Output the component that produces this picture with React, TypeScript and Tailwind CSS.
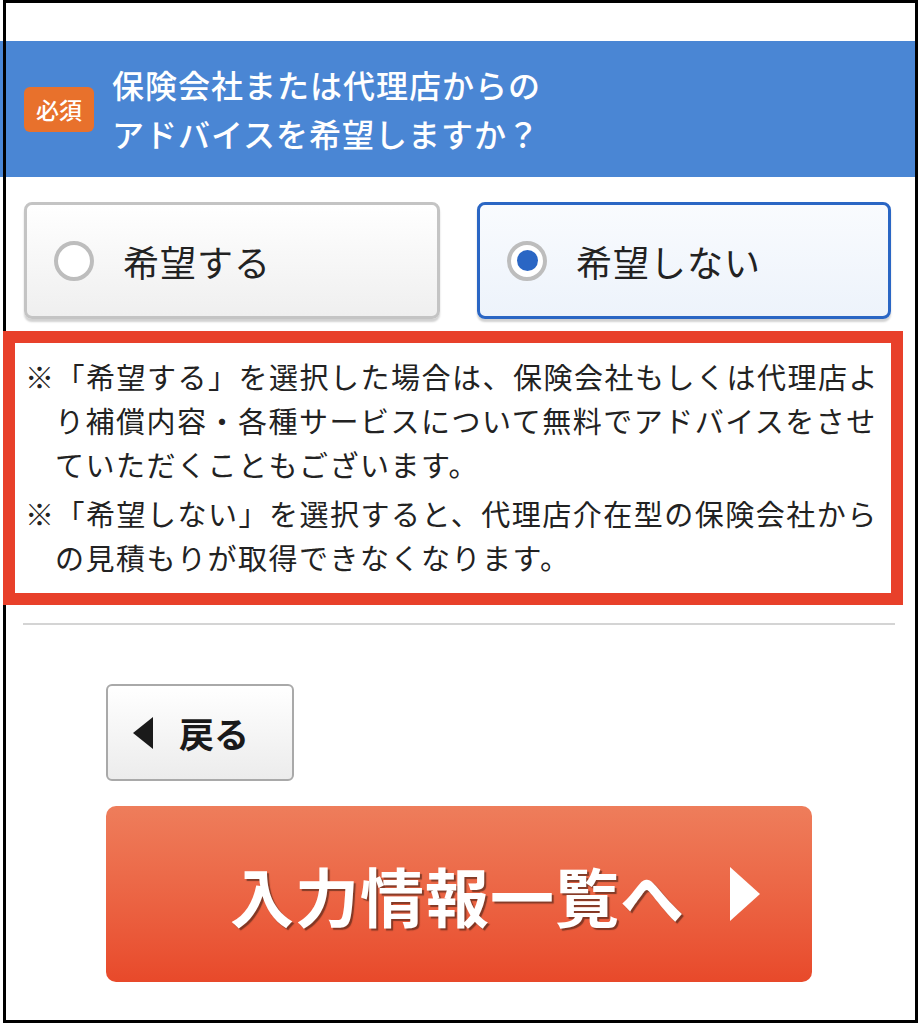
import React from 'react'

const jp = "font-['Noto_Sans_CJK_JP','Noto_Sans',sans-serif]"

function RadioCard({ label, checked }: { label: string; checked?: boolean }) {
  return (
    <div
      className={
        checked
          ? 'flex h-[117px] items-center rounded-[8px] border-[3px] border-[#2a66c4] bg-gradient-to-b from-[#f9fbfe] to-[#edf3fb] pl-[27px] shadow-[0_3px_2px_rgba(0,0,0,0.18)]'
          : 'flex h-[117px] items-center rounded-[8px] border-[3px] border-[#c4c4c4] bg-gradient-to-b from-white to-[#efefef] pl-[27px] shadow-[0_3px_2px_rgba(0,0,0,0.18)]'
      }
    >
      <span className="flex h-[40px] w-[40px] shrink-0 items-center justify-center rounded-full border-[4px] border-[#bdbdbd] bg-white">
        {checked && <span className="h-[21px] w-[21px] rounded-full bg-[#2a66c4]" />}
      </span>
      <span className="ml-[29px] text-[36px] leading-none tracking-[1px] text-[#222]">
        {label}
      </span>
    </div>
  )
}

const notes = [
  [
    '※「希望する」を選択した場合は、保険会社もしくは代理店よ',
    'り補償内容・各種サービスについて無料でアドバイスをさせ',
    'ていただくこともございます。',
  ],
  [
    '※「希望しない」を選択すると、代理店介在型の保険会社から',
    'の見積もりが取得できなくなります。',
  ],
]

export default function App() {
  return (
    <div className={`relative h-[1024px] w-[919px] overflow-hidden bg-white ${jp}`}>
      {/* outer frame */}
      <div className="pointer-events-none absolute top-0 left-[3px] z-10 h-[1023px] w-[915px] border-[3px] border-black" />

      <div className="pt-[41px]">
        <div className="flex h-[136px] w-[916px] items-center bg-[#4a86d4] pl-[24px]">
          <span className="flex h-[45px] w-[70px] items-center justify-center rounded-[6px] bg-[#e8712c] text-[23px] font-medium text-white">
            必須
          </span>
          <h2 className="ml-[18px] text-[32px] leading-[49px] font-medium tracking-[1px] text-white">
            保険会社または代理店からの
            <br />
            アドバイスを希望しますか？
          </h2>
        </div>

        <div className="mt-[25px] flex gap-[37px] pl-[24px]">
          <div className="w-[416px]">
            <RadioCard label="希望する" />
          </div>
          <div className="w-[414px]">
            <RadioCard label="希望しない" checked />
          </div>
        </div>

        <div className="relative z-20 mt-[12px] ml-[3px] w-[900px] border-[12px] border-[#e8402a] bg-white pt-[11px] pb-[14px] pl-[10px] text-[29px] leading-[44px] tracking-[1.5px] whitespace-nowrap text-[#222]">
          {notes.map((lines, i) => (
            <p key={i} className={i > 0 ? 'mt-[5px]' : ''}>
              {lines.map((line, j) => (
                <span key={j} className={j > 0 ? 'block pl-[30px]' : 'block'}>
                  {line}
                </span>
              ))}
            </p>
          ))}
        </div>

        <div className="mt-[18px] ml-[23px] h-[2px] w-[872px] bg-[#d4d4d4]" />

        <div className="mt-[59px] ml-[106px] flex h-[97px] w-[188px] items-center rounded-[6px] border-2 border-[#a9a9a9] bg-gradient-to-b from-white to-[#ececec] pl-[25px]">
          <svg viewBox="0 0 20 32" className="h-[32px] w-[20px]" aria-hidden="true">
            <polygon points="20,0 20,32 0,16" fill="#1a1a1a" />
          </svg>
          <span className="ml-[26px] text-[35px] leading-none font-bold text-[#1a1a1a]">戻る</span>
        </div>

        <div className="mt-[25px] ml-[106px] flex h-[176px] w-[706px] items-center rounded-[10px] bg-gradient-to-b from-[#ee7d5b] to-[#e8492a] pl-[124px]">
          <span className="text-[64px] leading-none font-bold tracking-[1px] text-white [text-shadow:2px_2px_1px_rgba(60,30,20,0.6)]">
            入力情報一覧へ
          </span>
          <svg viewBox="0 0 30 54" className="ml-[45px] h-[54px] w-[30px]" aria-hidden="true">
            <polygon points="0,0 30,27 0,54" fill="#ffffff" />
          </svg>
        </div>
      </div>
    </div>
  )
}
